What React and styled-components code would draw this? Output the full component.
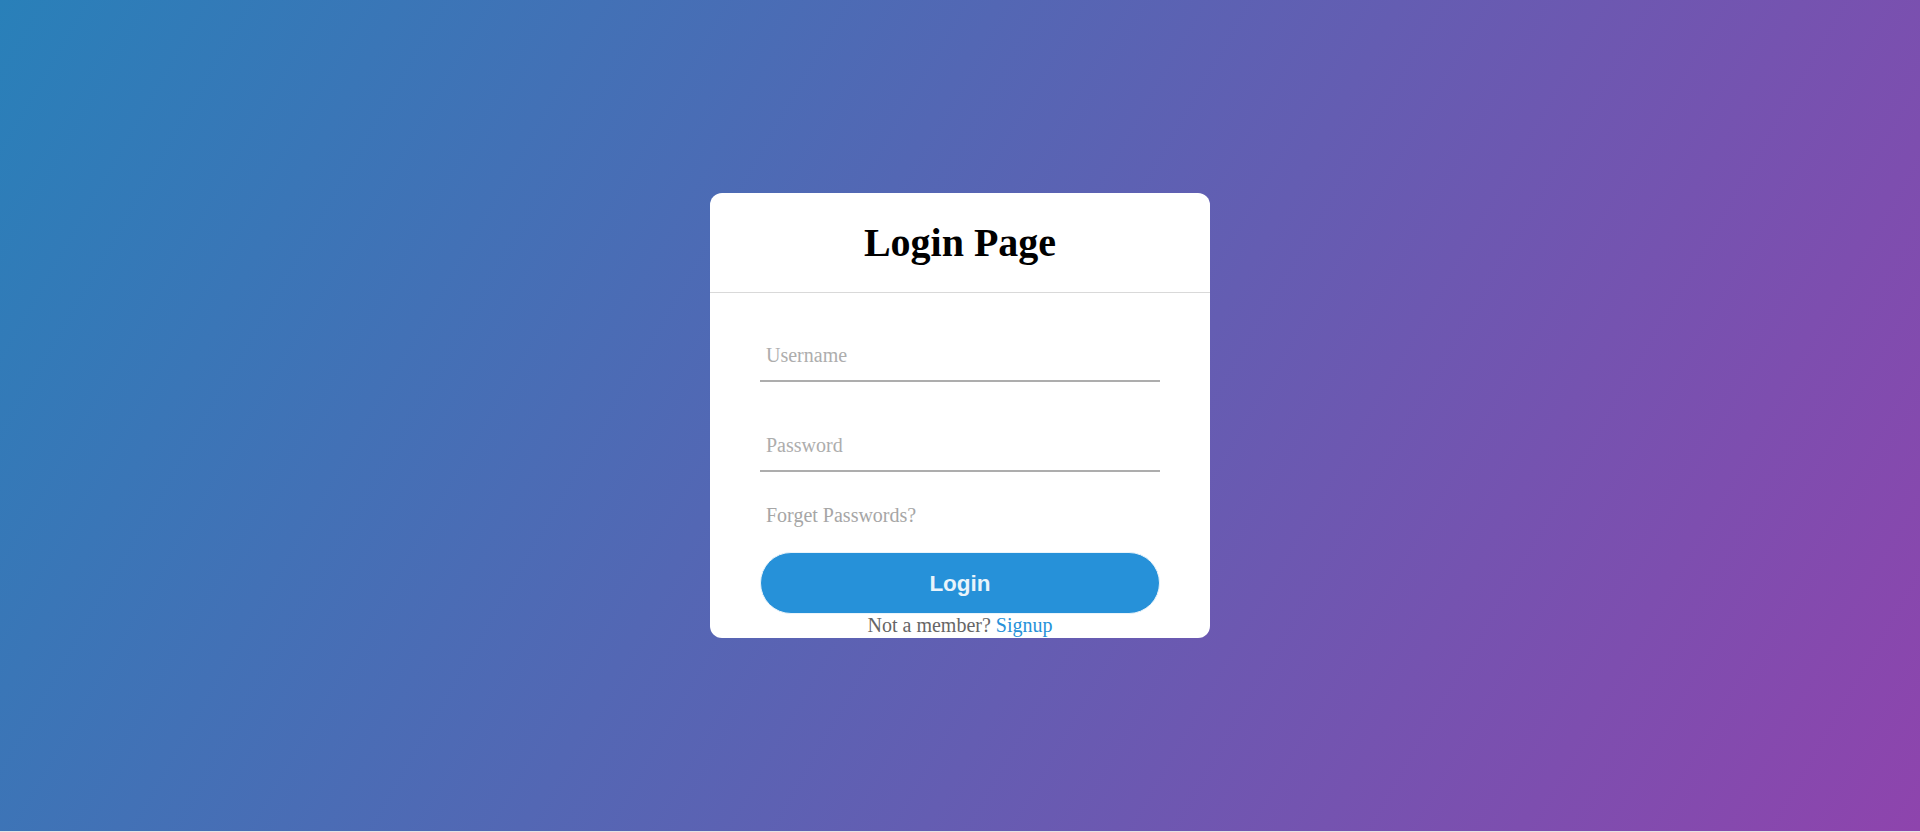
import React from "react"
import styled, { createGlobalStyle } from "styled-components"

const GlobalStyle = createGlobalStyle`
  html {
    background: #e4e4e4;
  }
  body {
    margin: 0;
    padding: 0;
    font-family: "Liberation Serif", "Times New Roman", serif;
  }
`

const Page = styled.div`
  height: calc(100vh - 1px);
  background: linear-gradient(120deg, #2980b9, #8e44ad);
  display: flex;
  align-items: center;
  justify-content: center;
  overflow: hidden;
`

const Card = styled.div`
  width: 500px;
  background: #fff;
  border-radius: 12px;
`

const Title = styled.h1`
  margin: 0;
  height: 100px;
  display: flex;
  align-items: center;
  justify-content: center;
  box-sizing: border-box;
  font-size: 40px;
  font-weight: 700;
  color: #000;
  border-bottom: 1.5px solid #d9d9d9;
`

const Form = styled.form`
  padding: 0 50px;
  box-sizing: border-box;
`

const Field = styled.div`
  position: relative;
  border-bottom: 2.5px solid #adadad;
  margin: 37.5px 0;
`

const Input = styled.input`
  width: 100%;
  box-sizing: border-box;
  padding: 0 6px;
  height: 50px;
  font-size: 20px;
  font-family: inherit;
  border: none;
  background: none;
  outline: none;
`

const Label = styled.label`
  position: absolute;
  top: 50%;
  left: 6px;
  transform: translateY(-50%);
  color: #adadad;
  font-size: 20px;
  pointer-events: none;
`

const Forgot = styled.div`
  margin: -5px 0 25px 6px;
  color: #a6a6a6;
  font-size: 20px;
  cursor: pointer;
`

const Submit = styled.button`
  display: block;
  width: 100%;
  height: 62px;
  margin: 0;
  padding-top: 2px;
  border: 1.25px solid #e9f4fb;
  background: #2691d9;
  border-radius: 31px;
  font-family: "Liberation Sans", Arial, sans-serif;
  font-size: 22.5px;
  font-weight: 700;
  color: #e9f4fb;
  cursor: pointer;
`

const SignupLine = styled.div`
  text-align: center;
  font-size: 20px;
  color: #666;
  line-height: 23px;
  padding-bottom: 1px;
`

const SignupLink = styled.a`
  color: #2691d9;
  text-decoration: none;
`

const App = () => {
  return (
    <>
      <GlobalStyle />
      <Page>
        <Card>
          <Title>Login Page</Title>
          <Form onSubmit={e => e.preventDefault()}>
            <Field>
              <Input type="text" required />
              <Label>Username</Label>
            </Field>
            <Field>
              <Input type="password" required />
              <Label>Password</Label>
            </Field>
            <Forgot>Forget Passwords?</Forgot>
            <Submit type="submit">Login</Submit>
            <SignupLine>
              Not a member? <SignupLink href="#">Signup</SignupLink>
            </SignupLine>
          </Form>
        </Card>
      </Page>
    </>
  )
}

export default App
